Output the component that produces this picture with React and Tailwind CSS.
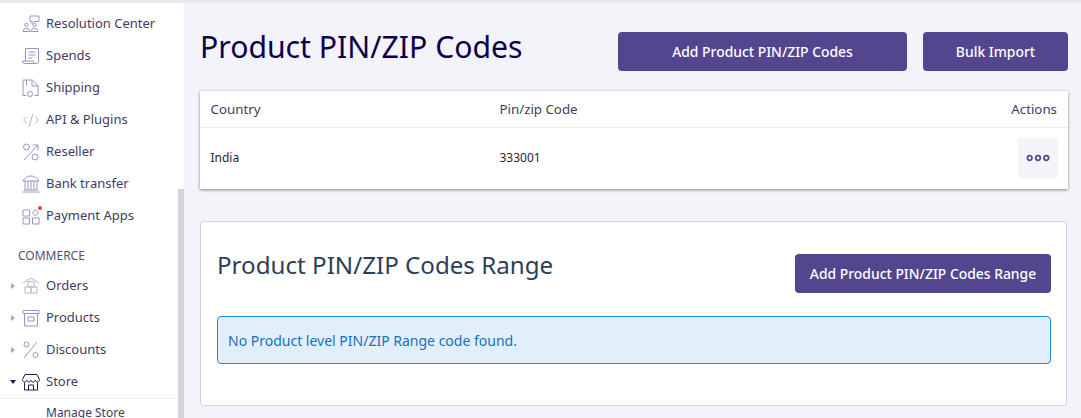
import { CodeXml } from "lucide-react";

const stroke = { fill: "none", stroke: "currentColor", strokeWidth: 1 };

const ResolutionIcon = () => (
  <svg viewBox="0 0 18 18" className="w-[18px] h-[18px]" {...stroke}>
    <circle cx="4.500" cy="10" r="1.700" />
    <circle cx="12.500" cy="10" r="1.700" />
    <path d="M1 16.500c0-2 1.500-3 3.500-3s3.500 1 3.500 3zM9 16.500c0-2 1.500-3 3.500-3s3.500 1 3.500 3z" />
    <path d="M8 1h9v5.500h-5l-2 2v-2H8z" />
  </svg>
);
const SpendsIcon = () => (
  <svg viewBox="0 0 18 18" className="w-[18px] h-[18px]" {...stroke}>
    <path d="M3.500 14V1.500h13V14c0 1.500-1 2.500-2 2.500H2.500C1.500 16.500.5 15.500.5 14h11c0 1 .5 2.500 2 2.500" />
    <path d="M6.500 5h7M6.500 8h7M6.500 11h4" />
  </svg>
);
const ShippingIcon = () => (
  <svg viewBox="0 0 18 18" className="w-[18px] h-[18px]" {...stroke}>
    <path d="M4 16.500H1V1h9.500l5.500 5.500v10h-3.500" />
    <path d="M10 1.500V7h6M4.500 1v5" />
    <circle cx="8" cy="15" r="2.500" />
  </svg>
);
const ResellerIcon = () => (
  <svg viewBox="0 0 18 18" className="w-[18px] h-[18px]" {...stroke}>
    <circle cx="4.500" cy="4" r="3" />
    <circle cx="13" cy="14" r="3" />
    <path d="M2 17 16 2M10.500 2H16v5.500" />
  </svg>
);
const BankIcon = () => (
  <svg viewBox="0 0 18 18" className="w-[18px] h-[18px]" {...stroke}>
    <path d="M1 6c1.500-3 4.500-5 8-5s6.500 2 8 5z" />
    <path d="M3 6v9M6 6v9M9 6v9M12 6v9M15 6v9M2 15h14M.5 17h17" />
  </svg>
);
const AppsIcon = () => (
  <svg viewBox="0 0 18 18" className="w-[18px] h-[18px]" {...stroke}>
    <path d="M1 3h6.500v6H1zM1 11h6.500v6H1zM10.500 11H17v6h-6.500zM10.500 6l3-3.500 3 3.500-3 3z" />
  </svg>
);
const BoxesIcon = () => (
  <svg viewBox="0 0 18 18" className="w-[18px] h-[18px] opacity-70" {...stroke}>
    <path d="M1 6l8-5 8 5" />
    <path d="M6 4.500h6v5.500H6zM3 10h6v6H3zM9 10h6v6H9z" />
  </svg>
);
const ProductsIcon = () => (
  <svg viewBox="0 0 18 18" className="w-[18px] h-[18px]" {...stroke}>
    <path d="M1 1.500h16M2.500 4.500h13V17h-13zM6 8h6v4H6z" />
    <path d="M1 1.500v3h16v-3" />
  </svg>
);
const DiscountIcon = () => (
  <svg viewBox="0 0 18 18" className="w-[18px] h-[18px]" {...stroke}>
    <circle cx="4.500" cy="3.500" r="2.500" />
    <circle cx="13.500" cy="14" r="2.500" />
    <path d="M2 17 15 1" />
  </svg>
);
const StoreIcon = () => (
  <svg viewBox="0 0 18 18" className="w-[18px] h-[18px] text-[#1f1a4d]" {...stroke}>
    <path d="M3 1.500h12l2.500 5c0 3-3.500 3-4.200.8-.8 2.200-3.800 2.200-4.300 0-.5 2.200-3.500 2.200-4.300 0C4 9.500.5 9.500.5 6.500z" />
    <path d="M2.500 9.500v7.500h13V9.500M6.500 17v-5h5v5" />
  </svg>
);
const DotsIcon = () => (
  <svg viewBox="0 0 24 8" className="w-6 h-2 text-[#54458f]" fill="none" stroke="currentColor" strokeWidth="1.700">
    <circle cx="3.700" cy="4" r="2.300" />
    <circle cx="12" cy="4" r="2.300" />
    <circle cx="20.300" cy="4" r="2.300" />
  </svg>
);

const topItems = [
  ["Resolution Center", <ResolutionIcon />],
  ["Spends", <SpendsIcon />],
  ["Shipping", <ShippingIcon />],
  ["API & Plugins", <CodeXml className="w-[18px] h-[18px]" strokeWidth={1} />],
  ["Reseller", <ResellerIcon />],
  ["Bank transfer", <BankIcon />],
];
const commerceItems = [
  ["Orders", <BoxesIcon />],
  ["Products", <ProductsIcon />],
  ["Discounts", <DiscountIcon />],
];

function NavRow({ label, icon, caret, open, dot }) {
  return (
    <div className="h-8 flex items-center text-[13px] text-[#3f3b63]">
      <span className="w-[22px] pl-[10px] flex items-center shrink-0">
        {caret && (
          <span
            className={
              open
                ? "w-0 h-0 border-x-[3px] border-x-transparent border-t-[4px] border-t-[#1f1a4d]"
                : "ml-[1px] w-0 h-0 border-y-[3.5px] border-y-transparent border-l-[4px] border-l-[#a9a5c9]"
            }
          />
        )}
      </span>
      <span className="relative w-[24px] h-[18px] shrink-0 text-[#9a95c4]">
        {icon}
        {dot && <span className="absolute -top-[1px] left-[16px] w-1 h-1 rounded-full bg-[#e8431f]" />}
      </span>
      <span>{label}</span>
    </div>
  );
}

function Sidebar() {
  return (
    <aside className="relative w-[184px] shrink-0 h-full bg-white overflow-hidden pt-[5px]">
      {topItems.map(([label, icon]) => (
        <NavRow key={label} label={label} icon={icon} />
      ))}
      <NavRow label="Payment Apps" icon={<AppsIcon />} dot />
      <div className="h-[38px] pl-[18px] pt-[15px] text-[12px] leading-[18px] text-[#55516f]">COMMERCE</div>
      {commerceItems.map(([label, icon]) => (
        <NavRow key={label} label={label} icon={icon} caret />
      ))}
      <NavRow label="Store" icon={<StoreIcon />} caret open />
      <div className="ml-[2px] mr-[6px] border-t border-[#ececf2] pl-[44px] pt-[5px] text-[12px] leading-[18px] text-[#3f3b63]">
        Manage Store
      </div>
      <div className="absolute right-0 top-[186px] bottom-0 w-[6px] bg-[#d3d3dc]" />
    </aside>
  );
}

function PrimaryButton({ children, className }) {
  return (
    <button className={`h-[39px] pt-[1px] rounded-[4px] bg-[#54458f] text-white text-[13.900px] font-medium ${className}`}>
      {children}
    </button>
  );
}

export default function App() {
  return (
    <div className="w-[1081px] h-[418px] overflow-hidden flex flex-col bg-[#f3f4f9] font-['Noto_Sans',sans-serif]">
      <div className="h-[3px] shrink-0 bg-[#e8e8ee]" />
      <div className="flex flex-1 min-h-0">
        <Sidebar />
        <main className="flex-1 pl-4 pr-[13px] pt-[29px]">
          <div className="flex items-center h-[39px]">
            <h1 className="text-[30.200px] leading-[39px] text-[#0c0048] relative -top-[5px]">Product PIN/ZIP Codes</h1>
            <PrimaryButton className="ml-auto w-[289px]">Add Product PIN/ZIP Codes</PrimaryButton>
            <PrimaryButton className="ml-4 w-[145px]">Bulk Import</PrimaryButton>
          </div>

          <div className="mt-5 h-[98px] bg-white shadow-[0_1px_3px_rgba(0,0,0,0.45)]">
            <div className="h-[37px] pt-[2px] pl-[10.500px] pr-[11px] flex items-center border-b border-[#ebebef] text-[#3f3b63] text-[13.300px]">
              <span className="w-[289px]">Country</span>
              <span>Pin/zip Code</span>
              <span className="ml-auto">Actions</span>
            </div>
            <div className="h-[61px] pb-[2px] pl-[10.500px] pr-[10px] flex items-center text-[#2a2438] text-[12px]">
              <span className="w-[289px]">India</span>
              <span>333001</span>
              <button className="ml-auto w-10 h-10 mt-[1px] rounded-[2px] bg-[#f3f4f9] flex items-center justify-center">
                <DotsIcon />
              </button>
            </div>
          </div>

          <section className="mt-8 h-[185px] w-[867px] bg-white border border-[#cfd4dc] rounded-[3px] pl-4 pr-[15px] pt-8">
            <div className="flex items-center h-[39px]">
              <h2 className="text-[24.150px] leading-[30px] text-[#2b3f58] relative -top-[9px]">Product PIN/ZIP Codes Range</h2>
              <PrimaryButton className="ml-auto w-[256px]">Add Product PIN/ZIP Codes Range</PrimaryButton>
            </div>
            <div className="mt-[23px] h-12 rounded-[4px] border border-[#1a8ce8] bg-[#e2eefa] px-[10px] flex items-center text-[14px] text-[#1272c4]">
              No Product level PIN/ZIP Range code found.
            </div>
          </section>
        </main>
      </div>
    </div>
  );
}
